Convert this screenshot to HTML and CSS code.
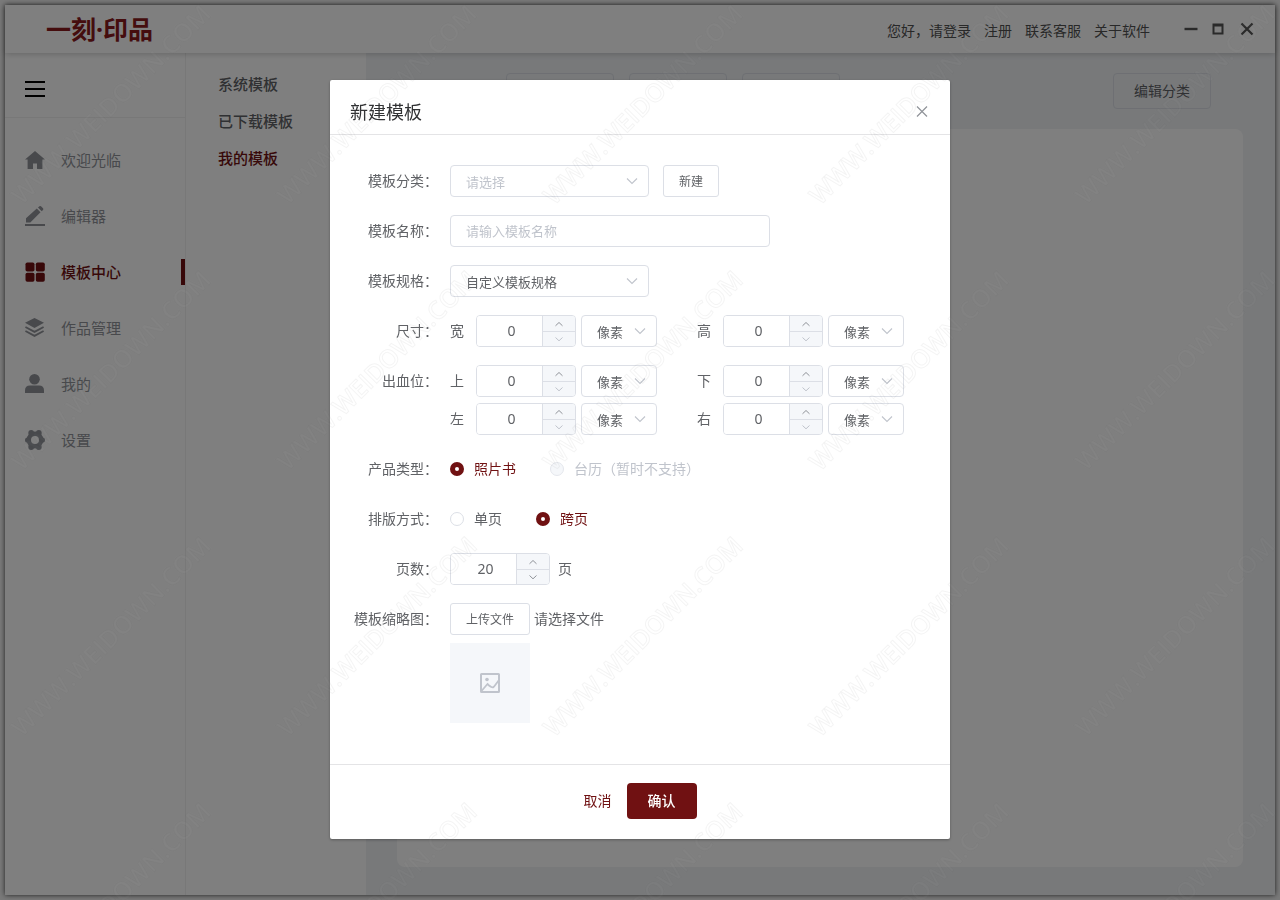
FILE: index.html
```html
<!DOCTYPE html>
<html lang="zh-CN">
<head>
<meta charset="utf-8">
<title>一刻·印品</title>
<meta name="viewport" content="width=device-width, initial-scale=1">
<link rel="stylesheet" href="styles.css">
</head>
<body>
<svg class="sprite" aria-hidden="true">
  <symbol id="chev-down" viewBox="0 0 14 14"><path d="M2 4.5l5 5 5-5" fill="none" stroke="currentColor" stroke-width="1.1"/></symbol>
  <symbol id="step-up" viewBox="0 0 10 10"><path d="M1.5 7.8L5 4.5l3.5 3.300" fill="none" stroke="currentColor" stroke-width="1"/></symbol>
  <symbol id="step-down" viewBox="0 0 10 10"><path d="M1.500 3.500L5 6.800l3.500-3.300" fill="none" stroke="currentColor" stroke-width="1"/></symbol>
</svg>

<div class="window">
  <header class="titlebar">
    <div class="logo">一刻·印品</div>
    <nav class="account">
      <a href="#">您好，请登录</a>
      <a href="#">注册</a>
      <a href="#">联系客服</a>
      <a href="#">关于软件</a>
    </nav>
    <div class="controls">
      <button type="button" aria-label="最小化"><svg width="14" height="14" viewBox="0 0 14 14"><path d="M0.5 7h13" stroke="currentColor" stroke-width="2.4"/></svg></button>
      <button type="button" aria-label="最大化"><svg width="14" height="14" viewBox="0 0 14 14"><path d="M0.5 1.5h11v11h-11z M2.5 4.5v6h7v-6z" fill="currentColor" fill-rule="evenodd"/></svg></button>
      <button type="button" aria-label="关闭窗口"><svg width="14" height="14" viewBox="0 0 14 14"><path d="M1.5 1.5l11 11M12.5 1.5l-11 11" stroke="currentColor" stroke-width="2.2"/></svg></button>
    </div>
  </header>

  <div class="workspace">
    <aside class="sidebar">
      <div class="burger-row">
        <button type="button" class="burger" aria-label="菜单"><svg width="20" height="18" viewBox="0 0 20 18"><path d="M0 2h20M0 9h20M0 16h20" stroke="currentColor" stroke-width="2"/></svg></button>
      </div>
      <nav class="main-nav">
        <a href="#"><svg viewBox="0 0 20 20"><path d="M10 1L0 9.6h2.6V19H8v-5.600h4V19h5.400V9.600H20z" fill="currentColor"/></svg>欢迎光临</a>
        <a href="#"><svg viewBox="0 0 20 20"><path d="M0 18h20v2H0z M1 16.500v-4.200L11.800 2.500l3.700 3.700L5.300 16.500z M13 1.500l1.400-1.200q.8-.6 1.600 0l2 2q.7.800 0 1.600l-1.300 1.300z" fill="currentColor"/></svg>编辑器</a>
        <a href="#" class="active"><svg viewBox="0 0 20 20"><g fill="currentColor"><rect x=".5" y=".5" width="9" height="9" rx="1.800"/><rect x="10.800" y=".5" width="9" height="9" rx="1.800"/><rect x=".5" y="10.800" width="9" height="9" rx="1.800"/><rect x="10.800" y="10.800" width="9" height="9" rx="1.800"/></g></svg>模板中心</a>
        <a href="#"><svg viewBox="0 0 20 20"><path d="M9.500 0L19 4.800 9.500 10 0 4.800z" fill="currentColor"/><path d="M.4 9l9.100 4.900L18.600 9M.4 13l9.100 4.900 9.100-4.900" fill="none" stroke="currentColor" stroke-width="1.900"/></svg>作品管理</a>
        <a href="#"><svg viewBox="0 0 20 20"><circle cx="9.500" cy="5.300" r="5.300" fill="currentColor"/><path d="M0 19v-2.500Q0 11.500 5 11.500h9q5 0 5 5V19z" fill="currentColor"/></svg>我的</a>
        <a href="#"><svg viewBox="0 0 20 20"><circle cx="10" cy="10" r="6.200" fill="none" stroke="currentColor" stroke-width="4.400"/><g fill="currentColor"><circle cx="2.600" cy="10" r="2.600"/><circle cx="17.400" cy="10" r="2.600"/><circle cx="6.200" cy="3" r="2.900"/><circle cx="13.800" cy="3" r="2.900"/><circle cx="6.200" cy="17" r="2.900"/><circle cx="13.800" cy="17" r="2.900"/></g></svg>设置</a>
      </nav>
    </aside>
    <nav class="sub-nav">
      <a href="#">系统模板</a>
      <a href="#">已下载模板</a>
      <a href="#" class="active">我的模板</a>
    </nav>
    <main class="content">
      <div class="toolbar">
        <div class="filters">
          <span class="filter wide"></span>
          <span class="filter"></span>
          <span class="filter"></span>
        </div>
        <button type="button" class="edit-category">编辑分类</button>
      </div>
      <section class="panel"></section>
    </main>
  </div>
</div>

<div class="overlay">
  <form class="dialog" role="dialog" aria-modal="true" aria-labelledby="dialog-title">
    <header class="dialog-head">
      <h1 id="dialog-title">新建模板</h1>
      <button type="button" class="close" aria-label="关闭"><svg width="12" height="12" viewBox="0 0 12 12"><path d="M1 0.500l10 10M11 0.500L1 10.500" stroke="currentColor" stroke-width="1.200"/></svg></button>
    </header>

    <div class="dialog-body">
      <div class="row">
        <label class="name" for="category">模板分类：</label>
        <div class="field">
          <span class="select medium empty"><select id="category"><option>请选择</option></select><svg><use href="#chev-down"/></svg></span>
          <button type="button" class="btn-small new">新建</button>
        </div>
      </div>
      <div class="row">
        <label class="name" for="tpl-name">模板名称：</label>
        <div class="field"><input id="tpl-name" class="text" type="text" placeholder="请输入模板名称"></div>
      </div>
      <div class="row">
        <label class="name" for="spec">模板规格：</label>
        <div class="field"><span class="select medium"><select id="spec"><option>自定义模板规格</option></select><svg><use href="#chev-down"/></svg></span></div>
      </div>
      <div class="row">
        <span class="name">尺寸：</span>
        <div class="field measures">
          <div class="measure"><label for="w">宽</label>
            <span class="number at-min"><input id="w" type="number" value="0"><span class="steps"><button type="button" aria-label="增加"><svg><use href="#step-up"/></svg></button><button type="button" aria-label="减少"><svg><use href="#step-down"/></svg></button></span></span>
            <span class="select unit"><select aria-label="宽度单位"><option>像素</option></select><svg><use href="#chev-down"/></svg></span></div>
          <div class="measure"><label for="h">高</label>
            <span class="number at-min"><input id="h" type="number" value="0"><span class="steps"><button type="button" aria-label="增加"><svg><use href="#step-up"/></svg></button><button type="button" aria-label="减少"><svg><use href="#step-down"/></svg></button></span></span>
            <span class="select unit"><select aria-label="高度单位"><option>像素</option></select><svg><use href="#chev-down"/></svg></span></div>
        </div>
      </div>
      <div class="row">
        <span class="name">出血位：</span>
        <div class="field measures">
          <div class="measure"><label for="top">上</label>
            <span class="number at-min"><input id="top" type="number" value="0"><span class="steps"><button type="button" aria-label="增加"><svg><use href="#step-up"/></svg></button><button type="button" aria-label="减少"><svg><use href="#step-down"/></svg></button></span></span>
            <span class="select unit"><select aria-label="上出血单位"><option>像素</option></select><svg><use href="#chev-down"/></svg></span></div>
          <div class="measure"><label for="bottom">下</label>
            <span class="number at-min"><input id="bottom" type="number" value="0"><span class="steps"><button type="button" aria-label="增加"><svg><use href="#step-up"/></svg></button><button type="button" aria-label="减少"><svg><use href="#step-down"/></svg></button></span></span>
            <span class="select unit"><select aria-label="下出血单位"><option>像素</option></select><svg><use href="#chev-down"/></svg></span></div>
          <div class="measure"><label for="left">左</label>
            <span class="number at-min"><input id="left" type="number" value="0"><span class="steps"><button type="button" aria-label="增加"><svg><use href="#step-up"/></svg></button><button type="button" aria-label="减少"><svg><use href="#step-down"/></svg></button></span></span>
            <span class="select unit"><select aria-label="左出血单位"><option>像素</option></select><svg><use href="#chev-down"/></svg></span></div>
          <div class="measure"><label for="right">右</label>
            <span class="number at-min"><input id="right" type="number" value="0"><span class="steps"><button type="button" aria-label="增加"><svg><use href="#step-up"/></svg></button><button type="button" aria-label="减少"><svg><use href="#step-down"/></svg></button></span></span>
            <span class="select unit"><select aria-label="右出血单位"><option>像素</option></select><svg><use href="#chev-down"/></svg></span></div>
        </div>
      </div>
      <div class="row">
        <span class="name">产品类型：</span>
        <div class="field radios">
          <label class="radio"><input type="radio" name="product" checked><span>照片书</span></label>
          <label class="radio"><input type="radio" name="product" disabled><span>台历（暂时不支持）</span></label>
        </div>
      </div>
      <div class="row">
        <span class="name">排版方式：</span>
        <div class="field radios">
          <label class="radio"><input type="radio" name="layout"><span>单页</span></label>
          <label class="radio"><input type="radio" name="layout" checked><span>跨页</span></label>
        </div>
      </div>
      <div class="row">
        <label class="name" for="pages">页数：</label>
        <div class="field pages">
          <span class="number"><input id="pages" type="number" value="20"><span class="steps"><button type="button" aria-label="增加"><svg><use href="#step-up"/></svg></button><button type="button" aria-label="减少"><svg><use href="#step-down"/></svg></button></span></span>
          <span>页</span>
        </div>
      </div>
      <div class="row">
        <span class="name">模板缩略图：</span>
        <div class="upload">
          <div class="field pick"><button type="button" class="btn-small">上传文件</button><span>请选择文件</span></div>
          <div class="thumb"><svg width="22" height="22" viewBox="0 0 22 22"><rect x="2" y="2" width="18" height="18" fill="none" stroke="currentColor" stroke-width="2" rx=".5"/><circle cx="8" cy="7.500" r="1.800" fill="currentColor"/><path d="M2.500 19l6-7q4.500 4.500 6 3 1-.8 5.500-7" fill="none" stroke="currentColor" stroke-width="1.800"/></svg></div>
        </div>
      </div>
    </div>

    <footer class="dialog-foot">
      <button type="button" class="cancel">取消</button>
      <button type="submit" class="confirm">确认</button>
    </footer>
  </form>
</div>

<svg class="watermark" aria-hidden="true">
  <defs>
    <pattern id="mark" x="8" y="-57" width="266" height="266" patternUnits="userSpaceOnUse">
      <text x="14" y="263" transform="rotate(-45 14 263)">WWW.WEIDOWN.COM</text>
    </pattern>
  </defs>
  <rect width="100%" height="100%" fill="url(#mark)"/>
</svg>
</body>
</html>
```
FILE: styles.css
```css
* { box-sizing: border-box; }

body {
  margin: 0;
  padding: 5px;
  min-height: 100vh;
  display: flex;
  background: #f4f4f4;
  color: #606266;
  font: 14px/20px "Noto Sans", "Noto Sans CJK SC", sans-serif;
}

button, input, select { font: inherit; color: inherit; margin: 0; }
button { padding: 0; border: 0; background: none; cursor: pointer; }
a { color: inherit; text-decoration: none; }
svg { display: block; flex: none; }
.sprite { position: absolute; width: 0; height: 0; }

/* Application window */
.window {
  flex: 1;
  display: flex;
  flex-direction: column;
  background: #fff;
  box-shadow: 0 0 5px rgba(0, 0, 0, .75);
}
.titlebar {
  display: flex;
  align-items: center;
  height: 48px;
  padding: 0 21px 0 41px;
  box-shadow: 0 1px 6px rgba(0, 0, 0, .2);
  z-index: 1;
}
.logo {
  flex: 1;
  color: #8a1a1c;
  font: 700 25px/32px "Noto Sans", "Noto Sans CJK SC", sans-serif;
}
.account { display: flex; gap: 13px; padding-top: 4px; color: #505050; }
.controls { display: flex; gap: 14px; margin-left: 34px; color: #555; }

.workspace { flex: 1; display: flex; }
.sidebar { width: 181px; border-right: 1px solid #f0f0f0; }
.burger-row {
  height: 65px;
  padding: 27px 20px 0;
  border-bottom: 1px solid #f0f0f0;
}
.burger { color: #000; }
.main-nav { padding-top: 14px; color: #909399; font-size: 15px; }
.main-nav a {
  display: flex;
  align-items: center;
  gap: 16px;
  height: 56px;
  padding-left: 20px;
}
.main-nav svg { width: 20px; height: 20px; }
.main-nav .active {
  color: #701112;
  font-weight: 500;
  background: linear-gradient(#701112, #701112) right center / 4px 26px no-repeat;
}
.sub-nav {
  display: flex;
  flex-direction: column;
  gap: 17px;
  width: 180px;
  padding: 21px 32px;
  font-size: 15px;
  font-weight: 500;
}
.sub-nav .active { color: #701112; }

.content {
  flex: 1;
  display: flex;
  flex-direction: column;
  gap: 20px;
  padding: 20px 32px 28px 31px;
  background: #f0f2f5;
}
.toolbar { display: flex; justify-content: space-between; padding-right: 32px; }
.filters { display: flex; gap: 15px; padding-left: 109px; }
.filter { width: 98px; height: 36px; border: 1px solid #dcdfe6; border-radius: 4px; }
.filter.wide { width: 108px; }
.edit-category {
  height: 36px;
  padding: 0 20px;
  border: 1px solid #dcdfe6;
  border-radius: 4px;
}
.panel { flex: 1; background: #fff; border-radius: 8px; }

/* Dialog */
.overlay {
  position: fixed;
  inset: 0;
  z-index: 10;
  padding: 80px 20px 20px;
  overflow: auto;
  background: rgba(0, 0, 0, .5);
}
.dialog {
  max-width: 620px;
  margin: 0 auto;
  background: #fff;
  border-radius: 2px;
  box-shadow: 0 1px 3px rgba(0, 0, 0, .3);
}
.dialog-head {
  display: flex;
  align-items: center;
  justify-content: space-between;
  height: 55px;
  padding: 9px 22px 0 20px;
  border-bottom: 1px solid #e4e4e6;
}
.dialog-head h1 { margin: 0; color: #303133; font-size: 18px; font-weight: 400; line-height: 24px; }
.close { color: #909399; }
.dialog-body {
  display: flex;
  flex-direction: column;
  gap: 18px;
  padding: 30px 20px 41px;
}
.row { display: flex; line-height: 32px; }
.name { width: 100px; padding-right: 12px; text-align: right; }
.row > .name { flex: none; white-space: nowrap; }
.field { display: flex; flex: 1; }

.text {
  width: 320px;
  height: 32px;
  padding: 0 15px;
  border: 1px solid #dcdfe6;
  border-radius: 4px;
  background: #fff;
  font-size: 13px;
}
.text::placeholder { color: #c0c4cc; opacity: 1; }

.select { position: relative; display: block; }
.select select {
  display: block;
  appearance: none;
  width: 100%;
  height: 32px;
  padding: 0 30px 0 15px;
  border: 1px solid #dcdfe6;
  border-radius: 4px;
  background: #fff;
  font-size: 13px;
}
.select svg {
  position: absolute;
  right: 10px;
  top: 9px;
  width: 14px;
  height: 14px;
  color: #c0c4cc;
  pointer-events: none;
}
.select.medium { width: 199px; }
.select.empty select { color: #c0c4cc; }
.select.unit { width: 76px; }

.btn-small {
  height: 32px;
  padding: 0 15px;
  border: 1px solid #dcdfe6;
  border-radius: 3px;
  background: #fff;
  font-size: 12px;
}
.new { margin-left: 14px; }

.measures { flex-wrap: wrap; gap: 6px 40px; }
.measure { display: flex; }
.measure label { width: 26px; }
.measure .unit { margin-left: 5px; }

.number {
  display: flex;
  width: 100px;
  height: 32px;
  border: 1px solid #dcdfe6;
  border-radius: 4px;
  overflow: hidden;
}
.number input {
  flex: 1;
  min-width: 0;
  padding: 0 8px 0 12px;
  border: 0;
  background: #fff;
  text-align: center;
  appearance: textfield;
}
.number input::-webkit-inner-spin-button { appearance: none; margin: 0; }
.steps {
  display: flex;
  flex-direction: column;
  width: 33px;
  border-left: 1px solid #dcdfe6;
  background: #f5f7fa;
  color: #909399;
}
.steps button { flex: 1; display: grid; place-items: center; }
.steps button + button { border-top: 1px solid #dcdfe6; }
.steps svg { width: 10px; height: 10px; }
.at-min button + button { color: #c0c4cc; }

.radios { gap: 34px; }
.radio { display: flex; align-items: center; gap: 10px; }
.radio input {
  appearance: none;
  width: 14px;
  height: 14px;
  border: 1px solid #dcdfe6;
  border-radius: 50%;
  background: #fff;
}
.radio input:checked { border: 5px solid #701112; }
.radio input:checked + span { color: #701112; }
.radio input:disabled { background: #f5f7fa; border-color: #e4e7ed; }
.radio input:disabled + span { color: #c0c4cc; }

.pages { gap: 8px; }
.upload { display: grid; gap: 8px; }
.pick { gap: 4px; }
.thumb {
  display: grid;
  place-items: center;
  width: 80px;
  height: 80px;
  background: #f5f7fa;
  color: #c0c4cc;
}

.dialog-foot {
  display: flex;
  justify-content: center;
  gap: 15px;
  padding: 18px 0 20px;
  border-top: 1px solid #e4e4e6;
}
.cancel { color: #701112; }
.confirm {
  height: 36px;
  padding: 0 21px;
  border-radius: 4px;
  background: #701112;
  color: #fff;
  font-weight: 500;
}

.watermark {
  position: fixed;
  inset: 0;
  z-index: 20;
  width: 100%;
  height: 100%;
  pointer-events: none;
}
.watermark text {
  font: 600 25px "Open Sans", sans-serif;
  fill: rgba(255, 255, 255, .02);
  stroke: rgba(70, 70, 70, .06);
  stroke-width: 1px;
}
```
